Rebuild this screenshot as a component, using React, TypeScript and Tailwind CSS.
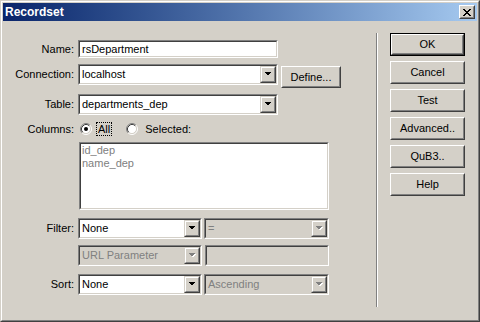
import React from "react";

function Sunken({ className = "", innerClass = "", children }: { className?: string; innerClass?: string; children?: React.ReactNode }) {
  return (
    <div className={`border border-t-[#808080] border-l-[#808080] border-r-white border-b-white ${className}`}>
      <div className={`h-full w-full border border-t-[#404040] border-l-[#404040] border-r-[#d4d0c8] border-b-[#d4d0c8] ${innerClass}`}>
        {children}
      </div>
    </div>
  );
}

function Raised({ className = "", innerClass = "", children }: { className?: string; innerClass?: string; children?: React.ReactNode }) {
  return (
    <div className={`bg-[#d4d0c8] border border-t-white border-l-white border-r-[#404040] border-b-[#404040] ${className}`}>
      <div className={`h-full w-full border border-t-[#d4d0c8] border-l-[#d4d0c8] border-r-[#808080] border-b-[#808080] ${innerClass}`}>
        {children}
      </div>
    </div>
  );
}

function DropBtn({ disabled = false }: { disabled?: boolean }) {
  return (
    <div className="w-[16px] h-[17px] shrink-0 bg-[#d4d0c8] border border-t-[#d4d0c8] border-l-[#d4d0c8] border-r-[#404040] border-b-[#404040]">
      <div className="h-full w-full border border-t-white border-l-white border-r-[#808080] border-b-[#808080] flex items-center justify-center">
        <svg width="8" height="5" viewBox="0 0 8 5" shapeRendering="crispEdges">
          {disabled ? (
            <>
              <polygon points="1,1 8,1 4.5,4.5" fill="#ffffff" />
              <polygon points="0,0 7,0 3.5,3.5" fill="#808080" />
            </>
          ) : (
            <polygon points="0,0 7,0 3.5,3.5" fill="#000000" />
          )}
        </svg>
      </div>
    </div>
  );
}

function Select({ width, text, disabled = false }: { width: string; text: string; disabled?: boolean }) {
  return (
    <Sunken className={`${width} h-[21px] shrink-0`} innerClass={disabled ? "bg-[#d4d0c8] flex" : "bg-white flex"}>
      <div className={`flex-1 pl-[2px] leading-[17px] whitespace-nowrap overflow-hidden ${disabled ? "text-[#808080]" : "text-black"}`}>{text}</div>
      <DropBtn disabled={disabled} />
    </Sunken>
  );
}

function Label({ children }: { children?: React.ReactNode }) {
  return <div className="w-[71px] shrink-0 text-right whitespace-nowrap">{children}</div>;
}

function Radio({ checked }: { checked: boolean }) {
  return (
    <svg width="12" height="12" viewBox="0 0 12 12" className="shrink-0">
      <circle cx="6" cy="6" r="4.5" fill="#ffffff" />
      <path d="M2.11 9.89 A5.5 5.5 0 0 1 9.89 2.11" fill="none" stroke="#808080" strokeWidth="1" />
      <path d="M9.89 2.11 A5.5 5.5 0 0 1 2.11 9.89" fill="none" stroke="#ffffff" strokeWidth="1" />
      <path d="M2.82 9.18 A4.5 4.5 0 0 1 9.18 2.82" fill="none" stroke="#404040" strokeWidth="1" />
      <path d="M9.18 2.82 A4.5 4.5 0 0 1 2.82 9.18" fill="none" stroke="#d4d0c8" strokeWidth="1" />
      {checked && <circle cx="6" cy="6" r="2" fill="#000000" />}
    </svg>
  );
}

function PushButton({ label, isDefault = false }: { label: string; isDefault?: boolean }) {
  if (isDefault) {
    return (
      <div className="w-[75px] h-[23px] border border-black">
        <Raised className="w-full h-full" innerClass="flex items-center justify-center leading-none">
          {label}
        </Raised>
      </div>
    );
  }
  return (
    <Raised className="w-[75px] h-[23px]" innerClass="flex items-center justify-center leading-none">
      {label}
    </Raised>
  );
}

export default function App() {
  return (
    <div className="w-[480px] h-[322px] bg-[#d4d0c8] border border-t-[#d4d0c8] border-l-[#d4d0c8] border-r-[#404040] border-b-[#404040] font-['Liberation_Sans',Arial,sans-serif] text-[11px] text-black">
      <div className="h-full w-full border border-t-white border-l-white border-r-[#808080] border-b-[#808080] p-px flex flex-col">
        {/* Title bar */}
        <div className="h-[18px] shrink-0 flex items-center justify-between pl-[2px] pr-[2px] bg-linear-to-r from-[#0a246a] to-[#a6caf0]">
          <div className="text-white font-bold text-[12px] leading-none">Recordset</div>
          <Raised className="w-[16px] h-[14px]" innerClass="flex items-center justify-center">
            <svg width="8" height="7" viewBox="0 0 8 7" shapeRendering="crispEdges">
              <rect x="0" y="0" width="2" height="1" fill="#000" />
              <rect x="6" y="0" width="2" height="1" fill="#000" />
              <rect x="1" y="1" width="2" height="1" fill="#000" />
              <rect x="5" y="1" width="2" height="1" fill="#000" />
              <rect x="2" y="2" width="4" height="1" fill="#000" />
              <rect x="3" y="3" width="2" height="1" fill="#000" />
              <rect x="2" y="4" width="4" height="1" fill="#000" />
              <rect x="1" y="5" width="2" height="1" fill="#000" />
              <rect x="5" y="5" width="2" height="1" fill="#000" />
              <rect x="0" y="6" width="2" height="1" fill="#000" />
              <rect x="6" y="6" width="2" height="1" fill="#000" />
            </svg>
          </Raised>
        </div>

        {/* Content */}
        <div className="flex-1 flex">
          {/* Left column */}
          <div className="w-[373px] shrink-0 flex flex-col pt-[19px]">
            <div className="flex items-center h-[18px]">
              <Label>Name:</Label>
              <Sunken className="ml-[4px] w-[200px] h-[18px]" innerClass="bg-white">
                <div className="pl-[2px] leading-[14px] whitespace-nowrap">rsDepartment</div>
              </Sunken>
            </div>

            <div className="flex items-start h-[21px] mt-[6px]">
              <div className="h-[21px] flex items-center">
                <Label>Connection:</Label>
              </div>
              <div className="ml-[4px]">
                <Select width="w-[200px]" text="localhost" />
              </div>
              <Raised className="ml-[3px] mt-[2px] w-[60px] h-[22px]" innerClass="flex items-center justify-center leading-none">
                Define...
              </Raised>
            </div>

            <div className="flex items-center h-[21px] mt-[9px]">
              <Label>Table:</Label>
              <div className="ml-[4px]">
                <Select width="w-[200px]" text="departments_dep" />
              </div>
            </div>

            <div className="flex items-center h-[14px] mt-[7px]">
              <Label>Columns:</Label>
              <div className="ml-[6px] flex items-center">
                <Radio checked={true} />
              </div>
              <div className="ml-[4px] border border-dotted border-black px-[1px] leading-[12px]">All</div>
              <div className="ml-[14px] flex items-center">
                <Radio checked={false} />
              </div>
              <div className="ml-[7px] leading-[12px]">Selected:</div>
            </div>

            <Sunken className="ml-[76px] mt-[6px] w-[250px] h-[68px]" innerClass="bg-white">
              <div className="pl-px text-[#808080] leading-[13px]">
                <div>id_dep</div>
                <div>name_dep</div>
              </div>
            </Sunken>

            <div className="flex items-center h-[21px] mt-[8px]">
              <Label>Filter:</Label>
              <div className="ml-[4px]">
                <Select width="w-[124px]" text="None" />
              </div>
              <div className="ml-[2px]">
                <Select width="w-[125px]" text="=" disabled />
              </div>
            </div>

            <div className="flex items-center h-[21px] mt-[6px]">
              <div className="w-[71px] shrink-0" />
              <div className="ml-[4px]">
                <Select width="w-[124px]" text="URL Parameter" disabled />
              </div>
              <Sunken className="ml-[3px] w-[124px] h-[21px]" innerClass="bg-[#d4d0c8]" />
            </div>

            <div className="flex items-center h-[21px] mt-[8px]">
              <Label>Sort:</Label>
              <div className="ml-[4px]">
                <Select width="w-[124px]" text="None" />
              </div>
              <div className="ml-[2px]">
                <Select width="w-[125px]" text="Ascending" disabled />
              </div>
            </div>
          </div>

          {/* Separator */}
          <div className="flex mt-[12px] h-[274px]">
            <div className="w-px h-full bg-[#808080]" />
            <div className="w-px h-full bg-white" />
          </div>

          {/* Right buttons */}
          <div className="pl-[12px] pt-[12px] flex flex-col gap-[5px]">
            <PushButton label="OK" isDefault />
            <PushButton label="Cancel" />
            <PushButton label="Test" />
            <PushButton label="Advanced.." />
            <PushButton label="QuB3.." />
            <PushButton label="Help" />
          </div>
        </div>
      </div>
    </div>
  );
}
